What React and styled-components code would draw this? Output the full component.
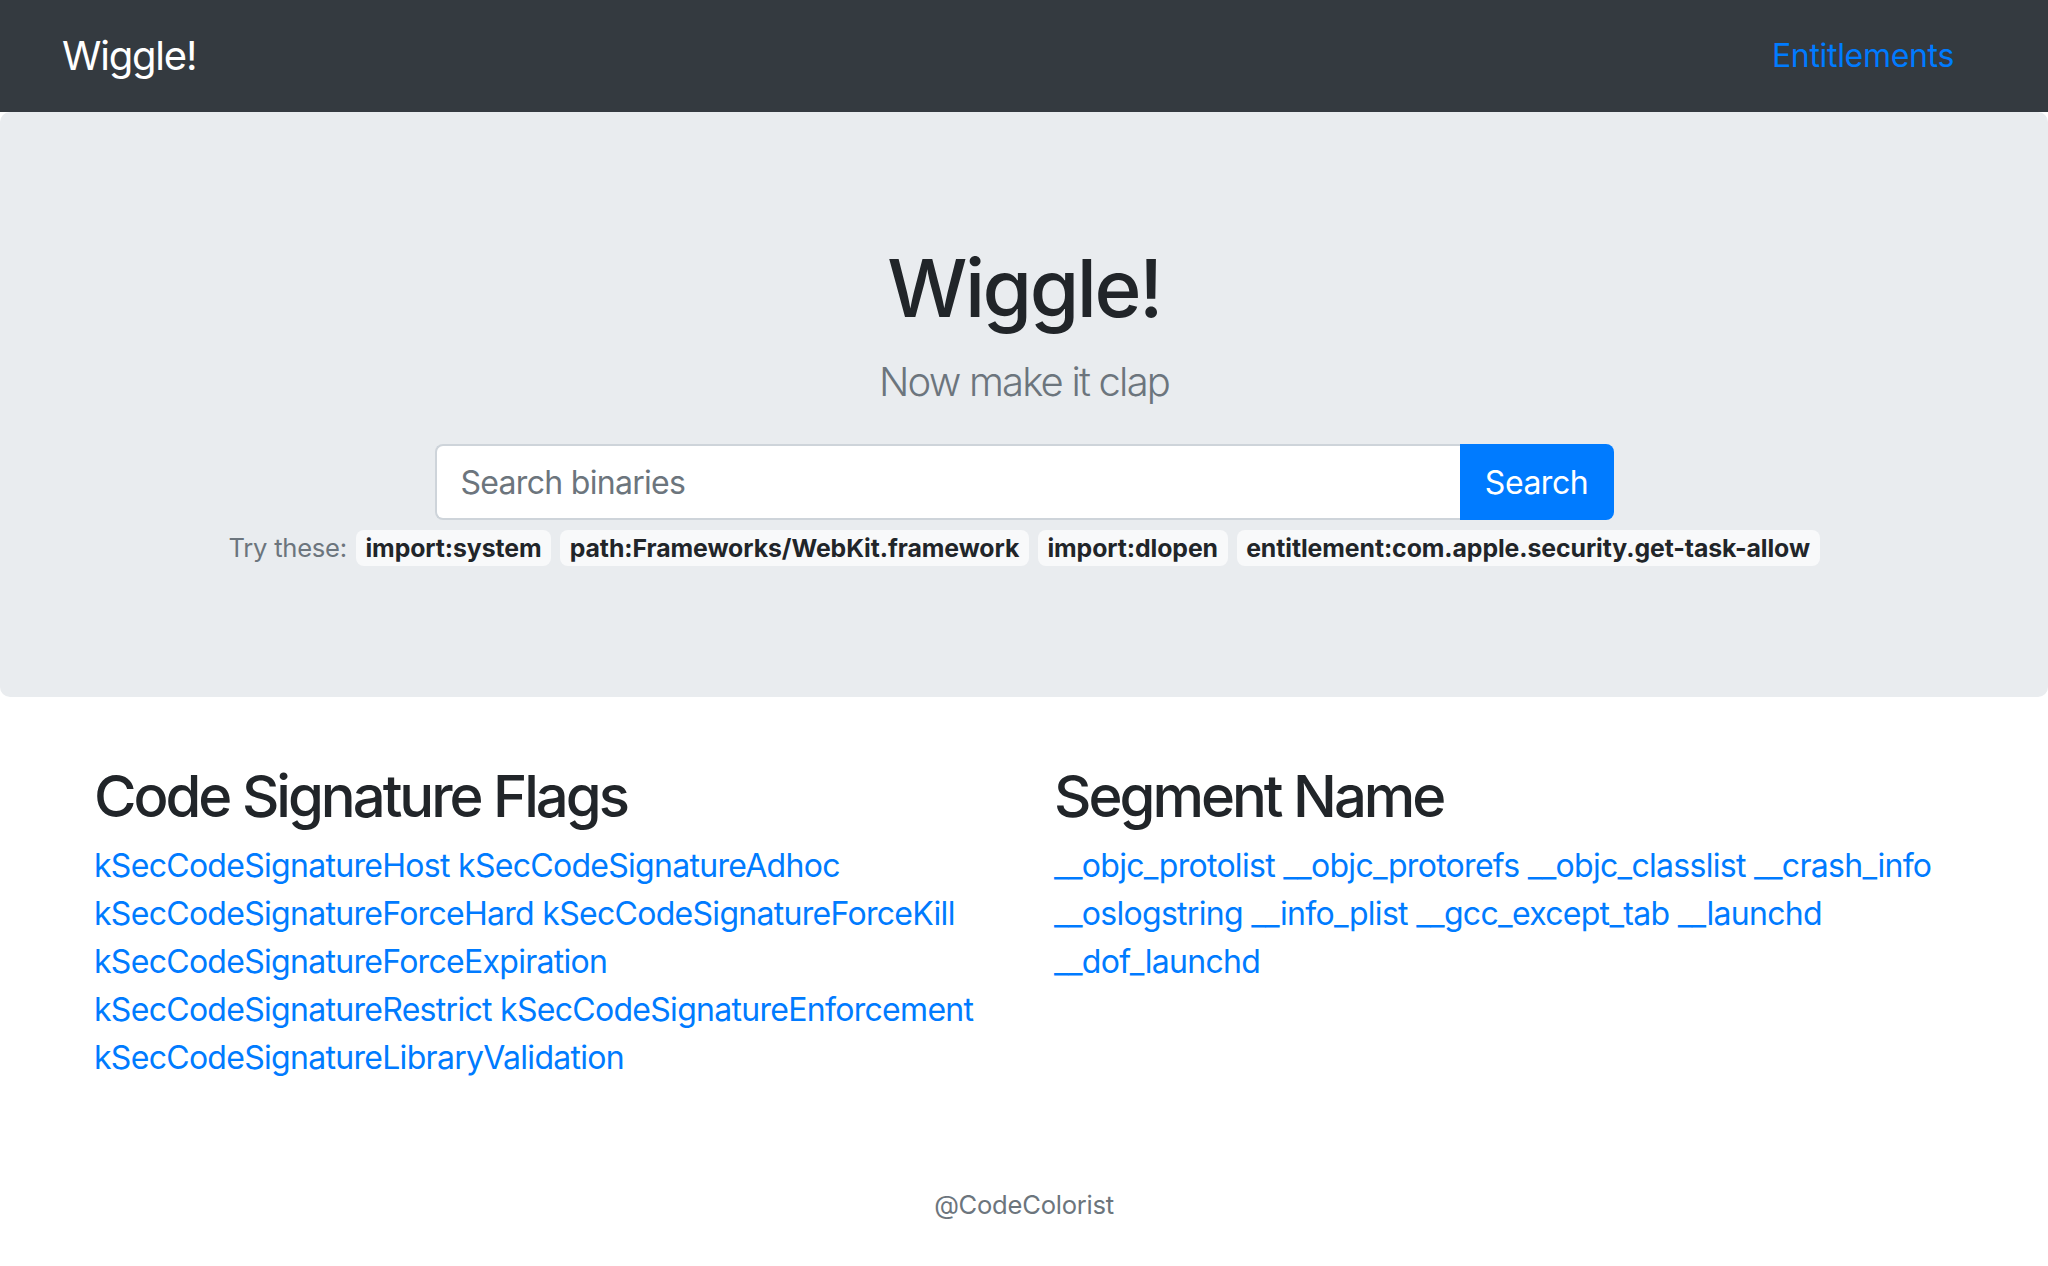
import React from "react";
import styled, { createGlobalStyle } from "styled-components";

const GlobalStyle = createGlobalStyle`
  html, body {
    margin: 0;
    padding: 0;
    background: #fff;
  }
  body {
    font-family: Inter, "Liberation Sans", sans-serif;
    color: #212529;
  }
  * {
    box-sizing: border-box;
  }
`;

const hints = [
  "import:system",
  "path:Frameworks/WebKit.framework",
  "import:dlopen",
  "entitlement:com.apple.security.get-task-allow",
];

const flagLines = [
  ["kSecCodeSignatureHost", "kSecCodeSignatureAdhoc"],
  ["kSecCodeSignatureForceHard", "kSecCodeSignatureForceKill"],
  ["kSecCodeSignatureForceExpiration"],
  ["kSecCodeSignatureRestrict", "kSecCodeSignatureEnforcement"],
  ["kSecCodeSignatureLibraryValidation"],
];

const segmentLines = [
  ["__objc_protolist", "__objc_protorefs", "__objc_classlist", "__crash_info"],
  ["__oslogstring", "__info_plist", "__gcc_except_tab", "__launchd"],
  ["__dof_launchd"],
];

function LinkGroup({ title, lines }) {
  return (
    <Column>
      <Heading>{title}</Heading>
      <Links>
        {lines.map((line, i) => (
          <Line key={i}>
            {line.map((name, j) => (
              <React.Fragment key={name}>
                {j > 0 && " "}
                <Link href="#">{name}</Link>
              </React.Fragment>
            ))}
          </Line>
        ))}
      </Links>
    </Column>
  );
}

export default function App() {
  return (
    <>
      <GlobalStyle />
      <Navbar>
        <Brand href="#">Wiggle!</Brand>
        <NavLink href="#">Entitlements</NavLink>
      </Navbar>
      <Jumbotron>
        <Title>Wiggle!</Title>
        <Lead>Now make it clap</Lead>
        <SearchGroup>
          <SearchInput placeholder="Search binaries" />
          <SearchButton>Search</SearchButton>
        </SearchGroup>
        <Hints>
          <HintLabel>Try these:</HintLabel>
          {hints.map((h) => (
            <Chip key={h}>{h}</Chip>
          ))}
        </Hints>
      </Jumbotron>
      <Container>
        <LinkGroup title="Code Signature Flags" lines={flagLines} />
        <LinkGroup title="Segment Name" lines={segmentLines} />
      </Container>
      <Footer>@CodeColorist</Footer>
    </>
  );
}

const Navbar = styled.nav`
  height: 112px;
  background: #343a40;
  display: flex;
  align-items: center;
  justify-content: space-between;
  padding: 0 94px 0 62px;
`;

const Brand = styled.a`
  color: #fff;
  font-size: 40px;
  line-height: 60px;
  letter-spacing: -0.03em;
  text-decoration: none;
`;

const NavLink = styled.a`
  color: #007bff;
  font-size: 32px;
  line-height: 48px;
  letter-spacing: -0.01em;
  text-decoration: none;
`;

const Jumbotron = styled.section`
  background: #e9ecef;
  border-radius: 10px;
  padding: 128px 32px 130px;
  margin-bottom: 64px;
  text-align: center;
`;

const Title = styled.h1`
  margin: 0 0 16px;
  font-size: 80px;
  font-weight: 500;
  line-height: 1.2;
  letter-spacing: -0.031em;
`;

const Lead = styled.p`
  margin: 0 0 32px;
  font-size: 40px;
  font-weight: 300;
  line-height: 1.5;
  letter-spacing: -0.045em;
  color: #6c757d;
`;

const SearchGroup = styled.form`
  display: flex;
  width: 1179px;
  height: 76px;
  margin: 0 auto;
`;

const SearchInput = styled.input`
  flex: 1;
  min-width: 0;
  border: 2px solid #ced4da;
  border-right: none;
  border-radius: 8px 0 0 8px;
  padding: 0 24px;
  font-family: inherit;
  font-size: 32px;
  letter-spacing: -0.022em;
  color: #495057;
  background: #fff;
  outline: none;

  &::placeholder {
    color: #6c757d;
  }
`;

const SearchButton = styled.button`
  width: 154px;
  border: none;
  border-radius: 0 8px 8px 0;
  background: #007bff;
  color: #fff;
  font-family: inherit;
  font-size: 32px;
  letter-spacing: -0.015em;
  cursor: pointer;
`;

const Hints = styled.div`
  display: flex;
  justify-content: center;
  align-items: baseline;
  gap: 9px;
  margin-top: 9px;
  font-size: 25.6px;
  line-height: 1.5;
  color: #6c757d;
`;

const HintLabel = styled.span`
  letter-spacing: -0.01em;
`;

const Chip = styled.span`
  font-size: 24.8px;
  font-weight: 700;
  line-height: 24px;
  letter-spacing: -0.003em;
  color: #212529;
  background: #f8f9fa;
  padding: 6px 9.6px;
  border-radius: 8px;
`;

const Container = styled.main`
  max-width: 1920px;
  margin: 0 auto;
  display: grid;
  grid-template-columns: minmax(0, 1fr) minmax(0, 1fr);
`;

const Column = styled.div`
  padding: 0 30px;
`;

const Heading = styled.h2`
  margin: 1px 0 10px;
  font-size: 58px;
  font-weight: 500;
  line-height: 1.2;
  letter-spacing: -0.052em;
`;

const Links = styled.div`
  font-size: 32px;
  line-height: 48px;
  letter-spacing: -0.022em;
`;

const Line = styled.div`
  white-space: nowrap;
`;

const Link = styled.a`
  color: #007bff;
  text-decoration: none;
`;

const Footer = styled.footer`
  margin-top: 104px;
  text-align: center;
  font-size: 25.6px;
  line-height: 1.5;
  letter-spacing: -0.01em;
  color: #6c757d;
`;
